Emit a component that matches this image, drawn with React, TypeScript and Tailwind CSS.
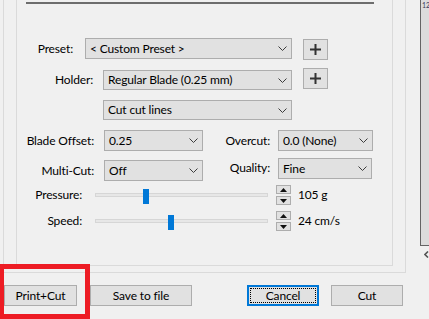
import React from "react";

const Chevron = () => (
  <svg width="9" height="5" viewBox="0 0 9 5" className="shrink-0">
    <polyline points="0.5,0.5 4.5,4.5 8.5,0.5" fill="none" stroke="#3c3c3c" strokeWidth="1" />
  </svg>
);

function Combo({ cls, text }: { cls: string; text: string }) {
  return (
    <div className={`flex items-center justify-between border border-[#adadad] bg-[#e1e1e1] pl-[4px] pr-[4px] ${cls}`}>
      <span className="whitespace-nowrap leading-none">{text}</span>
      <Chevron />
    </div>
  );
}

const Plus = ({ cls }: { cls: string }) => (
  <div className={`flex items-center justify-center border border-[#adadad] bg-[#e1e1e1] w-[25px] h-[21px] ${cls}`}>
    <svg width="11" height="11" viewBox="0 0 11 11">
      <rect x="4.5" y="0" width="2" height="11" fill="#333" />
      <rect x="0" y="4.5" width="11" height="2" fill="#333" />
    </svg>
  </div>
);

const Spinner = () => (
  <div className="ml-[8px] flex flex-col gap-[2px]">
    <div className="w-[15px] h-[9px] border border-[#adadad] bg-[#e1e1e1] flex items-center justify-center">
      <svg width="7" height="4" viewBox="0 0 7 4"><polygon points="0,4 7,4 3.5,0" fill="#111" /></svg>
    </div>
    <div className="w-[15px] h-[9px] border border-[#adadad] bg-[#e1e1e1] flex items-center justify-center">
      <svg width="7" height="4" viewBox="0 0 7 4"><polygon points="0,0 7,0 3.5,4" fill="#111" /></svg>
    </div>
  </div>
);

function SliderRow({ label, thumb, value, cls }: { label: string; thumb: number; value: string; cls: string }) {
  return (
    <div className={`flex items-center h-[20px] ${cls}`}>
      <div className="w-[65px] text-right leading-none">{label}</div>
      <div className="ml-[13px] w-[173px] h-[4px] border border-[#d6d6d6] bg-[#e7e7e7] relative">
        <div className="absolute top-[-5px] w-[6px] h-[15px] bg-[#0078d7]" style={{ left: thumb }} />
      </div>
      <Spinner />
      <div className="ml-[7px] leading-none whitespace-nowrap">{value}</div>
    </div>
  );
}

function Btn({ text, cls }: { text: string; cls: string }) {
  return (
    <div className={`h-[21px] border border-[#adadad] bg-[#e1e1e1] flex items-center justify-center leading-none ${cls}`}>
      {text}
    </div>
  );
}

export default function App() {
  return (
    <div className="w-[429px] h-[319px] bg-[#f0f0f0] relative overflow-hidden flex text-[12px] tracking-[-0.15px] text-black font-['Lato',sans-serif]">
      <div className="w-[420px] flex flex-col">
        <div className="ml-[3px] w-[403px] h-[273px] border-l border-r border-b border-[#dadada]">
          <div className="ml-[12px] w-[377px] h-[266px] border-l border-r border-b border-[#dadada] flex flex-col">
            <div className="ml-[9px] w-[348px] mt-[2px] h-[2px] bg-[#6d6d6d]" />

            <div className="flex items-start mt-[34px] h-[21px]">
              <div className="w-[56px] h-[21px] flex items-center justify-end">Preset:</div>
              <Combo cls="ml-[12px] w-[207px] h-[21px]" text="< Custom Preset >" />
              <Plus cls="ml-[11px] mt-[1px]" />
            </div>

            <div className="flex items-start mt-[11px] h-[20px]">
              <div className="w-[76px] h-[20px] flex items-center justify-end">Holder:</div>
              <Combo cls="ml-[10px] w-[189px] h-[20px]" text="Regular Blade (0.25 mm)" />
              <Plus cls="ml-[11px] -mt-[2px]" />
            </div>

            <div className="flex mt-[10px]">
              <Combo cls="ml-[86px] w-[189px] h-[20px]" text="Cut cut lines" />
            </div>

            <div className="flex items-start mt-[10px] h-[21px]">
              <div className="w-[77px] h-[21px] flex items-center justify-end">Blade Offset:</div>
              <Combo cls="ml-[10px] w-[99px] h-[21px]" text="0.25" />
              <div className="w-[67px] h-[21px] flex items-center justify-end">Overcut:</div>
              <Combo cls="ml-[8px] w-[95px] h-[21px]" text="0.0 (None)" />
            </div>

            <div className="flex items-start mt-[9px] h-[21px]">
              <div className="w-[77px] h-[21px] flex items-center justify-end">Multi-Cut:</div>
              <Combo cls="ml-[10px] w-[99px] h-[21px]" text="Off" />
              <div className="w-[67px] h-[21px] -mt-[3px] flex items-center justify-end">Quality:</div>
              <Combo cls="ml-[8px] w-[94px] h-[21px] -mt-[2px]" text="Fine" />
            </div>

            <SliderRow cls="mt-[4px]" label="Pressure:" thumb={47} value="105 g" />
            <SliderRow cls="mt-[6px]" label="Speed:" thumb={72} value="24 cm/s" />
          </div>
        </div>

        <div className="flex mt-[12px]">
          <Btn cls="ml-[4px] w-[73px]" text="Print+Cut" />
          <Btn cls="ml-[13px] w-[102px]" text="Save to file" />
          <div className="ml-[55px] w-[72px] h-[21px] border-2 border-[#0078d7] bg-[#e1e1e1] p-[1px]">
            <div className="w-full h-full border border-dotted border-black flex items-center justify-center leading-none">Cancel</div>
          </div>
          <Btn cls="ml-[12px] w-[72px]" text="Cut" />
        </div>
      </div>

      <div className="w-[9px] flex flex-col">
        <div className="h-[246px] border-l border-b border-[#646464] bg-[#dcdcdc] overflow-hidden">
          <div className="ml-[1px] mt-[2px] text-[7px] leading-none text-[#3a3a5a]">12</div>
        </div>
        <div className="mt-[5px] ml-[4px]">
          <svg width="5" height="7" viewBox="0 0 5 7">
            <polyline points="4,0.5 1,3.5 4,6.5" fill="none" stroke="#555" strokeWidth="1.6" />
          </svg>
        </div>
      </div>

      <div className="absolute left-[-1px] top-[264px] w-[91px] h-[55px] border-[5px] border-[#ed1c24]" />
    </div>
  );
}
